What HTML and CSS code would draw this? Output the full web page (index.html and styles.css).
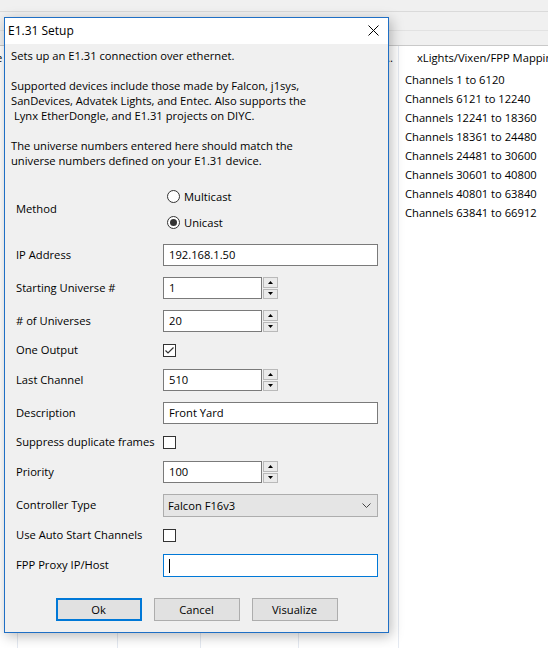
FILE: index.html
```html
<!DOCTYPE html>
<html lang="en">
<head>
<meta charset="utf-8">
<title>E1.31 Setup</title>
<link rel="stylesheet" href="styles.css">
</head>
<body>
<div class="app">
  <div class="bar bar1"></div>
  <div class="bar bar2"></div>
  <div class="bar bar3"></div>
  <div class="grid">
    <div class="left-pane">
      <div class="col c1"><div class="lhead h-e">e</div></div>
      <div class="col c2"></div>
      <div class="col c3"></div>
      <div class="col c4"></div>
      <div class="col c5"><div class="lhead h-dots">Universes…</div></div>
    </div>
    <div class="right-pane">
      <div class="rhead">xLights/Vixen/FPP Mapping</div>
      <ul class="chan">
        <li>Channels 1 to 6120</li>
        <li>Channels 6121 to 12240</li>
        <li>Channels 12241 to 18360</li>
        <li>Channels 18361 to 24480</li>
        <li>Channels 24481 to 30600</li>
        <li>Channels 30601 to 40800</li>
        <li>Channels 40801 to 63840</li>
        <li>Channels 63841 to 66912</li>
      </ul>
    </div>
  </div>

  <div class="dialog">
    <div class="titlebar">
      <span class="title">E1.31 Setup</span>
      <span class="close">
        <svg width="11" height="11" viewBox="0 0 11 11"><path d="M0.5 0.5 L10.5 10.5 M10.5 0.5 L0.5 10.5" stroke="#000" stroke-width="1" fill="none"/></svg>
      </span>
    </div>
    <div class="body">
      <div class="intro">
        <p>Sets up an E1.31 connection over ethernet.</p>
        <p>Supported devices include those made by Falcon, j1sys,<br>SanDevices, Advatek Lights, and Entec. Also supports the<br>&nbsp;Lynx EtherDongle, and E1.31 projects on DIYC.</p>
        <p>The universe numbers entered here should match the<br>universe numbers defined on your E1.31 device.</p>
      </div>

      <div class="form">
        <div class="lbl">Method</div>
        <div class="radios">
          <div class="radio"><span class="rb"></span>Multicast</div>
          <div class="radio"><span class="rb on"></span>Unicast</div>
        </div>

        <div class="lbl">IP Address</div>
        <div class="text">192.168.1.50</div>

        <div class="lbl">Starting Universe #</div>
        <div class="spin"><div class="spin-box">1</div><div class="spin-btns"><span class="sb up"><svg width="5" height="3" viewBox="0 0 5 3"><path d="M0 3 L2.5 0 L5 3 Z" fill="#000"/></svg></span><span class="sb dn"><svg width="5" height="3" viewBox="0 0 5 3"><path d="M0 0 L2.5 3 L5 0 Z" fill="#000"/></svg></span></div></div>

        <div class="lbl"># of Universes</div>
        <div class="spin"><div class="spin-box">20</div><div class="spin-btns"><span class="sb up"><svg width="5" height="3" viewBox="0 0 5 3"><path d="M0 3 L2.5 0 L5 3 Z" fill="#000"/></svg></span><span class="sb dn"><svg width="5" height="3" viewBox="0 0 5 3"><path d="M0 0 L2.5 3 L5 0 Z" fill="#000"/></svg></span></div></div>

        <div class="lbl">One Output</div>
        <div class="cbrow"><span class="cb"><svg width="11" height="11" viewBox="0 0 11 11"><path d="M1.5 5.5 L4 8 L9.5 2.5" stroke="#333" stroke-width="1.2" fill="none"/></svg></span></div>

        <div class="lbl">Last Channel</div>
        <div class="spin"><div class="spin-box">510</div><div class="spin-btns"><span class="sb up"><svg width="5" height="3" viewBox="0 0 5 3"><path d="M0 3 L2.5 0 L5 3 Z" fill="#000"/></svg></span><span class="sb dn"><svg width="5" height="3" viewBox="0 0 5 3"><path d="M0 0 L2.5 3 L5 0 Z" fill="#000"/></svg></span></div></div>

        <div class="lbl">Description</div>
        <div class="text">Front Yard</div>

        <div class="lbl">Suppress duplicate frames</div>
        <div class="cbrow"><span class="cb"></span></div>

        <div class="lbl">Priority</div>
        <div class="spin"><div class="spin-box">100</div><div class="spin-btns"><span class="sb up"><svg width="5" height="3" viewBox="0 0 5 3"><path d="M0 3 L2.5 0 L5 3 Z" fill="#000"/></svg></span><span class="sb dn"><svg width="5" height="3" viewBox="0 0 5 3"><path d="M0 0 L2.5 3 L5 0 Z" fill="#000"/></svg></span></div></div>

        <div class="lbl">Controller Type</div>
        <div class="combo"><span>Falcon F16v3</span><svg width="9" height="5" viewBox="0 0 9 5"><path d="M0.5 0.5 L4.5 4.5 L8.5 0.5" stroke="#444" stroke-width="1" fill="none"/></svg></div>

        <div class="lbl">Use Auto Start Channels</div>
        <div class="cbrow"><span class="cb"></span></div>

        <div class="lbl">FPP Proxy IP/Host</div>
        <div class="text focus"><span class="caret"></span></div>
      </div>

      <div class="buttons">
        <div class="btn default">Ok</div>
        <div class="btn">Cancel</div>
        <div class="btn">Visualize</div>
      </div>
    </div>
  </div>
</div>
</body>
</html>
```

FILE: styles.css
```css
* { box-sizing: border-box; }
html, body { margin: 0; padding: 0; }
body {
  width: 548px;
  height: 648px;
  overflow: hidden;
  background: #ffffff;
  font-family: "Open Sans", "Noto Sans", sans-serif;
  font-size: 11.2px;
  color: #000;
}
.app {
  position: relative;
  width: 548px;
  height: 648px;
  overflow: hidden;
}
.bar { background: #f0f0f0; }
.bar1 { height: 12px; border-bottom: 1px solid #dadada; }
.bar2 { height: 19px; border-bottom: 1px solid #e2e2e2; }
.bar3 { height: 15px; border-bottom: 1px solid #c9c9c9; }

.grid { display: flex; height: 602px; }
.left-pane {
  width: 399px;
  display: grid;
  grid-template-columns: 18px 100px 83px 98px 100px;
}
.col { border-right: 1px solid #e4e9f1; }
.lhead { height: 25px; line-height: 24px; white-space: nowrap; overflow: hidden; }
.h-e { text-indent: -4px; }
.h-dots { text-align: right; padding-right: 5px; }

.right-pane { flex: 1; }
.rhead { height: 25px; line-height: 24px; padding-left: 18px; white-space: nowrap; }
.chan { list-style: none; margin: 0; padding: 0 0 0 6px; }
.chan li { height: 19px; line-height: 18px; white-space: nowrap; }

.dialog {
  position: absolute;
  left: 4px;
  top: 17px;
  width: 385px;
  height: 616px;
  border: 1px solid #1f6fc5;
  background: #f0f0f0;
  box-shadow: 2px 3px 12px rgba(0,0,0,0.28);
  display: flex;
  flex-direction: column;
}
.titlebar {
  height: 26px;
  background: #fff;
  display: flex;
  align-items: center;
  justify-content: space-between;
  padding-left: 3px;
  padding-bottom: 1px;
  font-size: 12px;
}
.close { width: 30px; display: flex; justify-content: center; align-items: center; }
.close svg { display: block; }

.body { flex: 1; padding-top: 4px; }
.intro { padding-left: 6px; line-height: 15px; }
.intro p { margin: 0 0 15px 0; }
.intro p:last-child { margin-bottom: 0; }

.form {
  margin-top: 18px;
  padding: 0 10px 0 11px;
  display: grid;
  grid-template-columns: 147px 215px;
  row-gap: 11px;
  align-items: center;
}
.lbl { white-space: nowrap; line-height: 14px; padding-bottom: 1px; }
.radios { display: flex; flex-direction: column; gap: 5px; padding-left: 4px; }
.radio { height: 21px; display: flex; align-items: center; gap: 4px; }
.rb {
  width: 13px; height: 13px; border-radius: 50%;
  border: 1px solid #333; background: #fff;
  display: flex; align-items: center; justify-content: center;
}
.rb.on::after {
  content: ""; width: 7px; height: 7px; border-radius: 50%; background: #333;
}
.text {
  height: 22px;
  border: 1px solid #7a7a7a;
  background: #fff;
  display: flex;
  align-items: center;
  padding-left: 5px;
  padding-bottom: 1px;
}
.text.focus { border-color: #0078d7; height: 23px; padding-bottom: 0; }
.caret { width: 1px; height: 14px; background: #000; }

.spin { display: flex; width: 115px; height: 22px; }
.spin-box {
  width: 99px; height: 22px;
  border: 1px solid #7a7a7a; background: #fff;
  display: flex; align-items: center; padding-left: 5px; padding-bottom: 1px;
}
.spin-btns { width: 16px; display: flex; flex-direction: column; gap: 1px; padding: 0 0 0 1px; }
.sb {
  flex: 1;
  border: 1px solid #b9b9b9;
  background: #eaeaea;
  display: flex; align-items: center; justify-content: center;
}
.sb svg { display: block; }

.cbrow { height: 15px; display: flex; align-items: center; }
.cb {
  width: 13px; height: 13px; border: 1px solid #333; background: #fff;
  display: flex; align-items: center; justify-content: center;
}
.cb svg { display: block; }

.combo {
  height: 23px;
  border: 1px solid #adadad;
  background: #e5e5e5;
  display: flex; align-items: center; justify-content: space-between;
  padding: 0 6px 1px 4px;
}
.combo svg { display: block; }

.buttons {
  margin-top: 21px;
  display: flex;
  justify-content: center;
  gap: 12px;
}
.btn {
  width: 86px; height: 23px;
  border: 1px solid #adadad;
  background: #e1e1e1;
  display: flex; align-items: center; justify-content: center;
  padding-bottom: 1px;
}
.btn.default { border: 2px solid #0078d7; }
```
